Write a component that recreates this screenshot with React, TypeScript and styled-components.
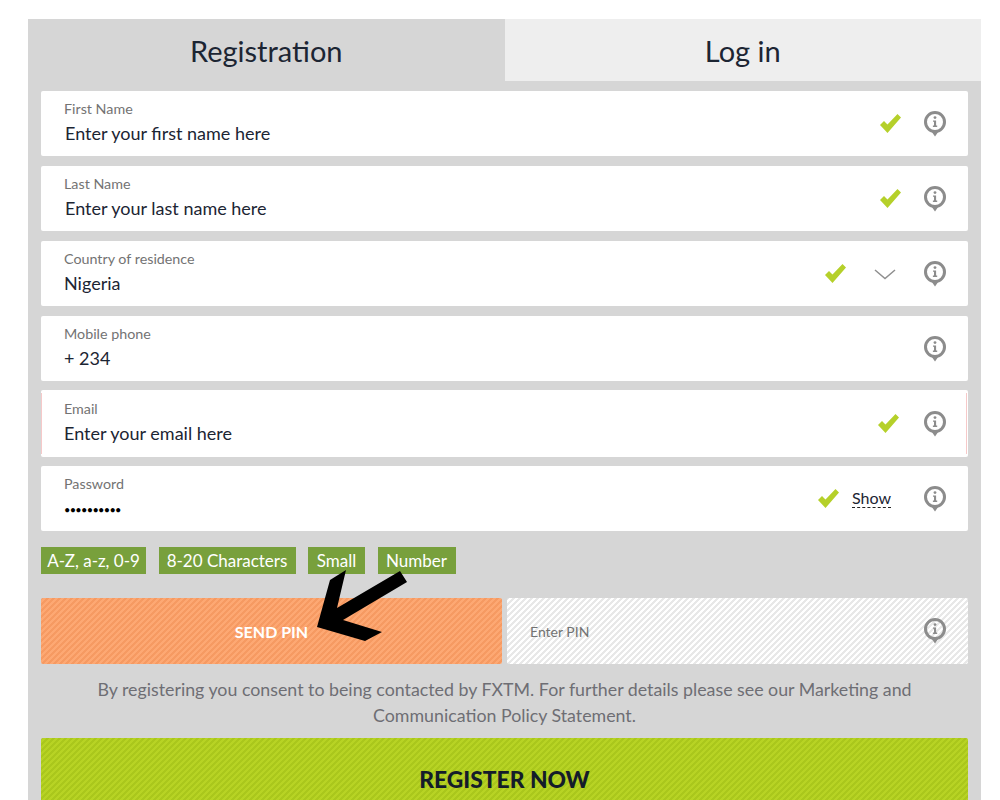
import styled, { createGlobalStyle } from 'styled-components';

const GlobalStyle = createGlobalStyle`
	html, body {
		margin: 0;
		padding: 0;
		height: 800px;
		overflow: hidden;
		background: #fff;
		font-family: 'Lato', 'Noto Sans', sans-serif;
	}
`;

// diagonal hatch as a 6px tile, so the stripes stay even across the whole button
const stripes = (base: string, line: string) => `
	background-color: ${base};
	background-image: linear-gradient(
		135deg,
		${line} 25%,
		${base} 25%,
		${base} 50%,
		${line} 50%,
		${line} 75%,
		${base} 75%
	);
	background-size: 6px 6px;
`;

const InfoIcon = () => (
	<InfoSvg viewBox="0 0 22 26" aria-hidden="true">
		<circle cx="11" cy="11" r="9.5" fill="none" stroke="#8c8c8c" strokeWidth="3" />
		<path d="M6.5 19 L15.5 19 L11 25.5 Z" fill="#8c8c8c" />
		<circle cx="11" cy="6.6" r="1.4" fill="#8c8c8c" />
		<path d="M9 9.4 H12.1 V14.6 H13.2 V16 H8.9 V14.6 H10 V10.7 H9 Z" fill="#8c8c8c" />
	</InfoSvg>
);

const CheckIcon = () => (
	<CheckSvg viewBox="0 0 21 19" aria-hidden="true">
		<path d="M0 11 L4 7 L7.5 10.5 L17.5 0 L21 3.5 L7.5 19 Z" fill="#b5d02a" />
	</CheckSvg>
);

const ChevronIcon = () => (
	<ChevronSvg viewBox="0 0 22 11" aria-hidden="true">
		<path d="M1 1 L11 9.5 L21 1" fill="none" stroke="#8f8f8f" strokeWidth="1.5" />
	</ChevronSvg>
);

const App = () => {
	return (
		<>
			<GlobalStyle />
			<Page>
				<Panel>
					<Tabs>
						<Tab $active>Registration</Tab>
						<Tab>Log in</Tab>
					</Tabs>
					<Fields>
						<Field>
							<FieldText>
								<Label>First Name</Label>
								<Value $indent>Enter your first name here</Value>
							</FieldText>
							<FieldIcons>
								<CheckIcon />
								<InfoIcon />
							</FieldIcons>
						</Field>
						<Field>
							<FieldText>
								<Label>Last Name</Label>
								<Value $indent>Enter your last name here</Value>
							</FieldText>
							<FieldIcons>
								<CheckIcon />
								<InfoIcon />
							</FieldIcons>
						</Field>
						<Field>
							<FieldText>
								<Label>Country of residence</Label>
								<Value>Nigeria</Value>
							</FieldText>
							<FieldIcons>
								<CheckIcon />
								<ChevronIcon />
								<InfoIcon />
							</FieldIcons>
						</Field>
						<Field>
							<FieldText>
								<Label>Mobile phone</Label>
								<Value>+ 234</Value>
							</FieldText>
							<FieldIcons>
								<InfoIcon />
							</FieldIcons>
						</Field>
						<EmailField>
							<FieldText>
								<Label>Email</Label>
								<Value>Enter your email here</Value>
							</FieldText>
							<FieldIcons $wide>
								<CheckIcon />
								<InfoIcon />
							</FieldIcons>
						</EmailField>
						<Field>
							<FieldText>
								<Label>Password</Label>
								<Dots>••••••••••</Dots>
							</FieldText>
							<FieldIcons>
								<CheckIcon />
								<ShowLink>Show</ShowLink>
								<InfoIcon />
							</FieldIcons>
						</Field>
					</Fields>
					<Pills>
						<Pill $width={105}>A-Z, a-z, 0-9</Pill>
						<Pill $width={137}>8-20 Characters</Pill>
						<Pill $width={57}>Small</Pill>
						<Pill $width={78}>Number</Pill>
					</Pills>
					<PinRow>
						<SendPin>SEND PIN</SendPin>
						<PinInput>
							<PinLabel>Enter PIN</PinLabel>
							<InfoIcon />
						</PinInput>
					</PinRow>
					<Consent>
						By registering you consent to being contacted by FXTM. For further details please see our
						Marketing and Communication Policy Statement.
					</Consent>
					<RegisterButton>REGISTER NOW</RegisterButton>
				</Panel>
				<ArrowSvg viewBox="0 0 100 80" aria-hidden="true">
					<polygon
						points="39,1 23,11 10,58 58,72 75,63 36,51 100,13 93,2 30,39"
						fill="#000"
					/>
				</ArrowSvg>
			</Page>
		</>
	);
};

const Page = styled.div`
	position: relative;
	height: 800px;
	overflow: hidden;
	padding: 19px 19px 0 28px;
	box-sizing: border-box;
`;

const Panel = styled.div`
	background: #d6d6d6;
	height: 781px;
	color: #1c2533;
`;

const Tabs = styled.div`
	display: flex;
	height: 62px;
`;

const Tab = styled.div<{ $active?: boolean }>`
	flex: 1;
	display: flex;
	align-items: center;
	justify-content: center;
	font-size: 29px;
	background: ${(props) => (props.$active ? '#d6d6d6' : '#eeeeee')};
`;

const Fields = styled.div`
	display: flex;
	flex-direction: column;
	gap: 10px;
	padding: 10px 13px 0;
`;

const Field = styled.div`
	display: flex;
	align-items: center;
	justify-content: space-between;
	height: 65px;
	box-sizing: border-box;
	padding: 0 22px 0 23px;
	background: #fff;
	border-radius: 2px;
`;

const EmailField = styled(Field)`
	position: relative;
	height: 67px;
	margin: -1px 0;

	&::before {
		content: '';
		position: absolute;
		top: 3px;
		bottom: 3px;
		left: 0;
		right: 1px;
		border-left: 1px solid #f6c9c9;
		border-right: 1px solid #f6c9c9;
	}
`;

const FieldText = styled.div`
	display: flex;
	flex-direction: column;
	gap: 3px;
	padding-bottom: 3px;
`;

const Label = styled.div`
	font-size: 14.3px;
	line-height: 18px;
	color: #737373;
`;

const Value = styled.div<{ $indent?: boolean }>`
	font-size: 18px;
	line-height: 24px;
	padding-left: ${(props) => (props.$indent ? '1px' : '0')};
`;

const Dots = styled.div`
	font-size: 11px;
	line-height: 24px;
	letter-spacing: -0.7px;
	margin: 2px 0 -2px;
	color: #000;
`;

const FieldIcons = styled.div<{ $wide?: boolean }>`
	display: flex;
	align-items: center;
	gap: ${(props) => (props.$wide ? '25px' : '23px')};
`;

const InfoSvg = styled.svg`
	width: 22px;
	height: 26px;
	display: block;
	flex-shrink: 0;
`;

const CheckSvg = styled.svg`
	width: 21px;
	height: 19px;
	display: block;
`;

const ChevronSvg = styled.svg`
	width: 22px;
	height: 11px;
	display: block;
	margin: 2px 5px 0 5px;
`;

const ShowLink = styled.span`
	font-size: 16px;
	line-height: 18px;
	margin-left: -10px;
	margin-right: 10px;
	border-bottom: 1px dashed #222;
`;

const Pills = styled.div`
	display: flex;
	gap: 12.5px;
	padding: 16px 13px 0;
`;

const Pill = styled.div<{ $width: number }>`
	width: ${(props) => props.$width}px;
	height: 27px;
	line-height: 27px;
	text-align: center;
	white-space: nowrap;
	background: #78a03c;
	color: #fff;
	font-size: 17px;
`;

const PinRow = styled.div`
	display: flex;
	gap: 5px;
	padding: 24px 13px 0;
`;

const SendPin = styled.div`
	width: 461px;
	height: 66px;
	display: flex;
	align-items: center;
	justify-content: center;
	box-sizing: border-box;
	border-radius: 2px;
	${stripes('#fda873', '#f69a62')}
	color: #fff;
	font-size: 16px;
	font-weight: 700;
`;

const PinInput = styled.div`
	flex: 1;
	height: 66px;
	display: flex;
	align-items: center;
	justify-content: space-between;
	padding: 0 22px 0 23px;
	box-sizing: border-box;
	border-radius: 2px;
	${stripes('#ffffff', '#e8e8e8')}
`;

const PinLabel = styled.div`
	font-size: 14px;
	color: #737373;
`;

const Consent = styled.div`
	width: 860px;
	margin: 12px auto 10px;
	text-align: center;
	font-size: 17.8px;
	line-height: 26px;
	color: #6e6e74;
`;

const RegisterButton = styled.div`
	height: 82px;
	margin: 0 13px;
	display: flex;
	align-items: center;
	justify-content: center;
	border-radius: 2px;
	${stripes('#b7d324', '#aac71c')}
	color: #141c2a;
	font-size: 22.8px;
	font-weight: 900;
`;

const ArrowSvg = styled.svg`
	position: absolute;
	left: 307px;
	top: 569px;
	width: 100px;
	height: 80px;
`;

export default App;
